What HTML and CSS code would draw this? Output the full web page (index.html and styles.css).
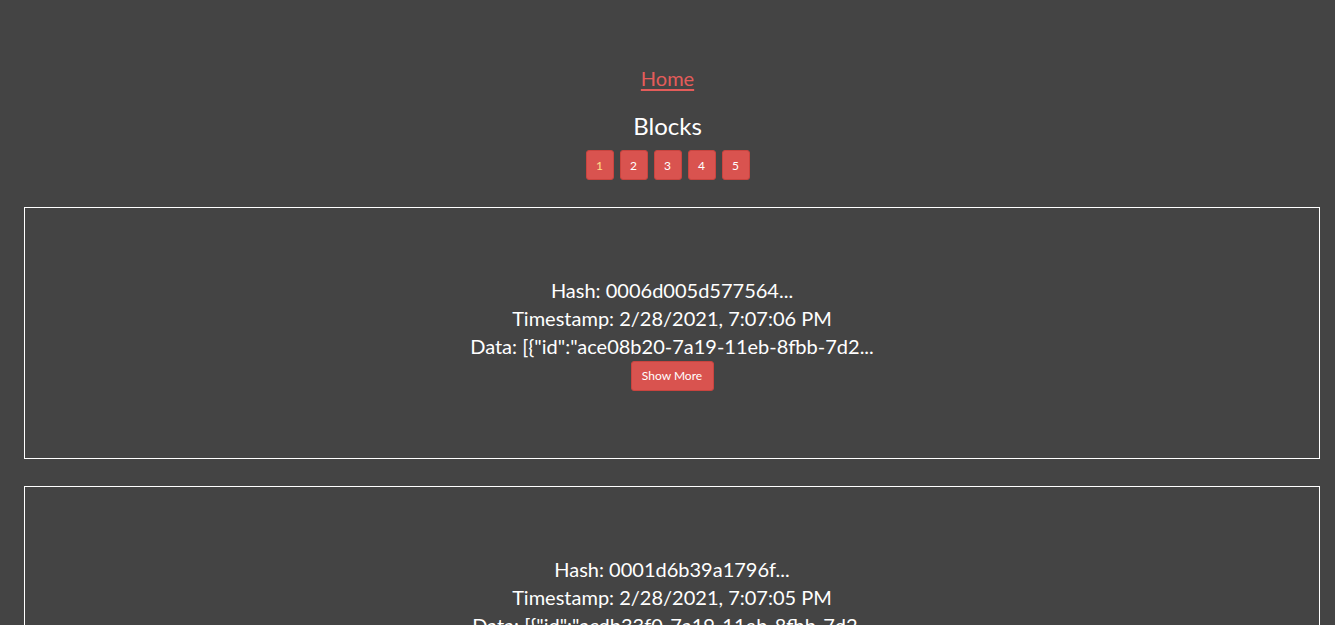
FILE: index.html
```html
<!DOCTYPE html>
<html>
<head>
<meta charset="utf-8">
<link rel="stylesheet" href="styles.css">
</head>
<body>
<div class="app">
  <nav class="nav"><a class="home" href="#">Home</a></nav>
  <h1 class="title">Blocks</h1>
  <div class="pager">
    <button class="page active">1</button>
    <button class="page">2</button>
    <button class="page">3</button>
    <button class="page">4</button>
    <button class="page">5</button>
  </div>
  <div class="blocks">
    <div class="block">
      <div class="line">Hash: 0006d005d577564...</div>
      <div class="line">Timestamp: 2/28/2021, 7:07:06 PM</div>
      <div class="line">Data: [{"id":"ace08b20-7a19-11eb-8fbb-7d2...</div>
      <button class="more">Show More</button>
    </div>
    <div class="block">
      <div class="line">Hash: 0001d6b39a1796f...</div>
      <div class="line">Timestamp: 2/28/2021, 7:07:05 PM</div>
      <div class="line">Data: [{"id":"acdb33f0-7a19-11eb-8fbb-7d2...</div>
      <button class="more">Show More</button>
    </div>
  </div>
</div>
</body>
</html>
```
FILE: styles.css
```css
html, body {
  margin: 0;
  padding: 0;
  background: #ffffff;
}
.app {
  height: 625px;
  overflow: hidden;
  background: #444444;
  color: #ffffff;
  font-family: "Lato", "Noto Sans", sans-serif;
  text-align: center;
  padding-top: 63px;
  box-sizing: border-box;
}
.nav {
  height: 30px;
  line-height: 30px;
}
.home {
  color: #e45c5a;
  font-size: 20px;
  text-decoration: underline;
  text-underline-offset: 3px;
}
.title {
  font-size: 24px;
  font-weight: 400;
  margin: 18px 0 0;
  line-height: 30px;
}
.pager {
  display: flex;
  justify-content: center;
  gap: 6px;
  margin-top: 9px;
}
.page {
  width: 28px;
  height: 30px;
  padding: 0;
  border: 1px solid #c9443f;
  border-radius: 3px;
  background: #d9534f;
  color: #ffffff;
  font-family: inherit;
  font-size: 12px;
}
.page.active {
  color: #ffe08a;
}
.blocks {
  display: flex;
  flex-direction: column;
  gap: 27px;
  margin-top: 27px;
  padding-left: 24px;
}
.block {
  width: 1296px;
  height: 252px;
  box-sizing: border-box;
  border: 1px solid #ffffff;
  display: flex;
  flex-direction: column;
  align-items: center;
  justify-content: center;
}
.line {
  font-size: 20px;
  line-height: 28px;
}
.more {
  margin-top: 1px;
  height: 30px;
  width: 83px;
  padding: 0;
  border: 1px solid #c9443f;
  border-radius: 3px;
  background: #d9534f;
  color: #ffffff;
  font-family: inherit;
  font-size: 12px;
}
```
